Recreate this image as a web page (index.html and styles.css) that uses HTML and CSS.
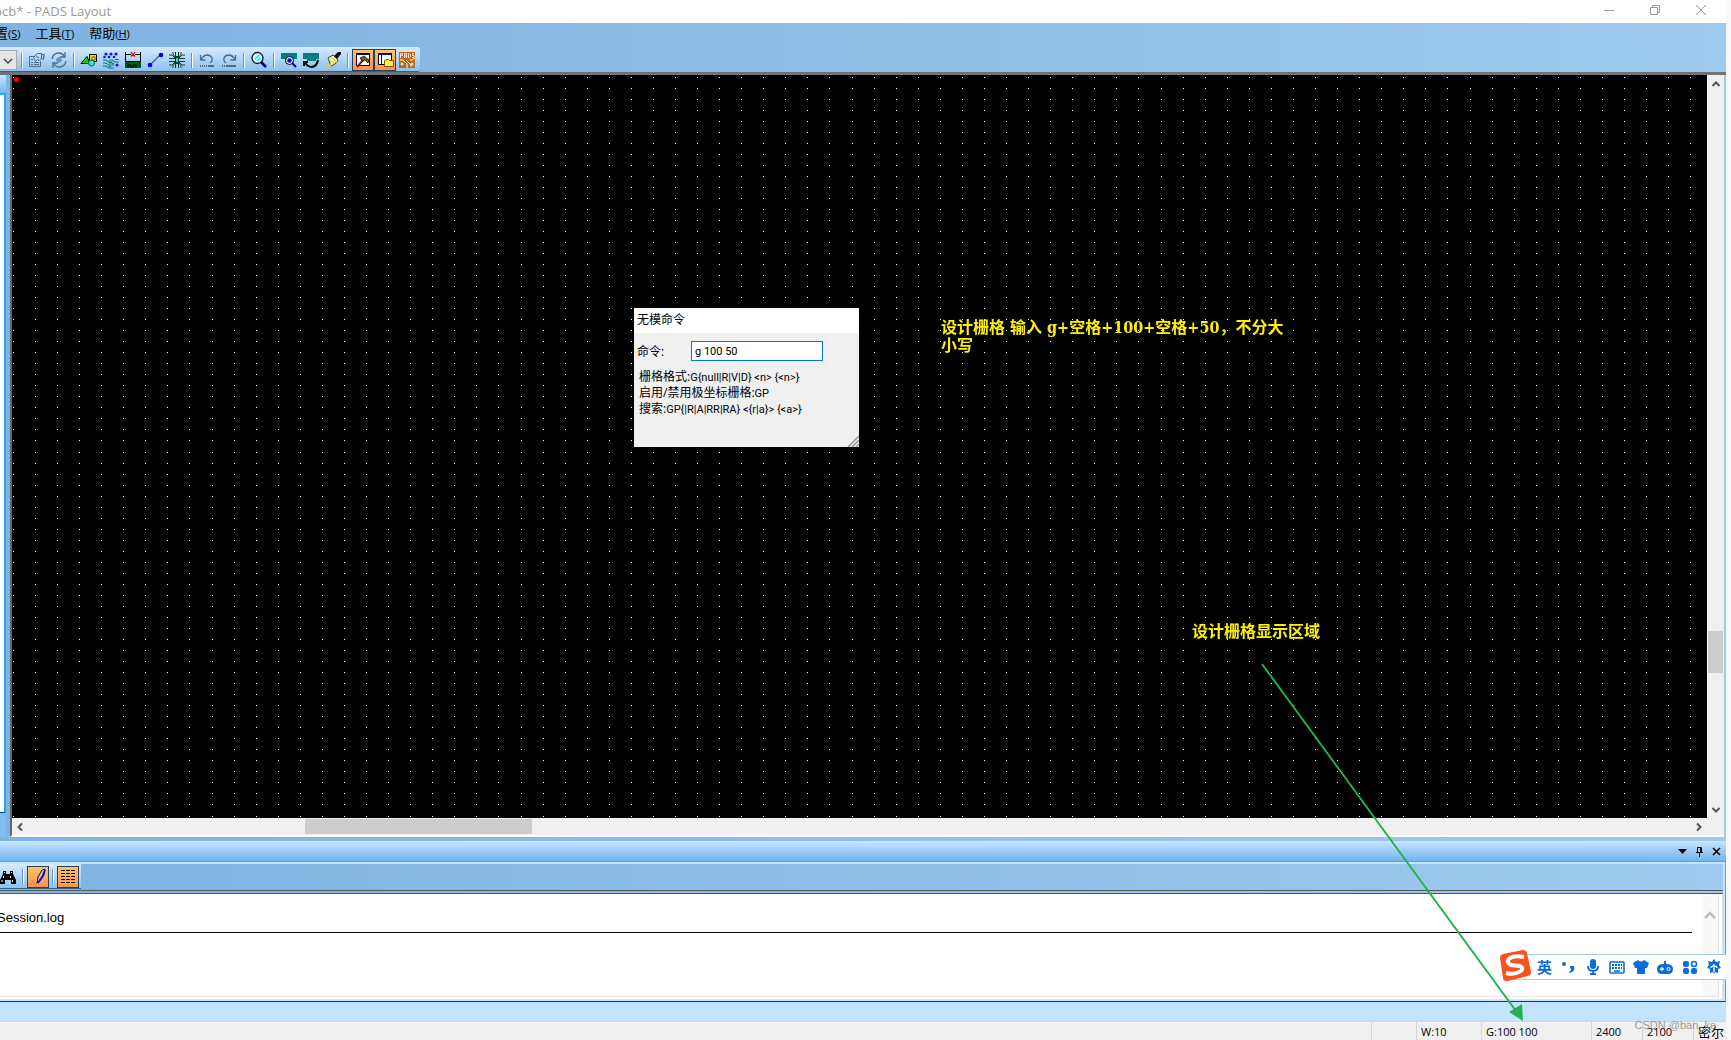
FILE: index.html
```html
<!DOCTYPE html>
<html lang="zh-CN">
<head>
<meta charset="utf-8">
<title>pcb* - PADS Layout</title>
<link rel="stylesheet" href="styles.css">
</head>
<body>
<div class="app">
  <header class="titlebar">
    <span class="title">pcb* - PADS Layout</span>
    <div class="window-buttons">
      <button aria-label="Minimize"><svg width="12" height="12" viewBox="0 0 12 12"><path d="M1 6.500h10" /></svg></button>
      <button aria-label="Restore"><svg width="12" height="12" viewBox="0 0 12 12"><path d="M1.500 3.500h7v7h-7zM3.500 3.500v-2h7v7h-2" /></svg></button>
      <button aria-label="Close"><svg width="12" height="12" viewBox="0 0 12 12"><path d="M1 1l10 10M11 1L1 11" /></svg></button>
    </div>
  </header>

  <nav class="menubar">
    <button class="menu menu-first">置<small>(<u>S</u>)</small></button>
    <button class="menu">工具<small>(<u>T</u>)</small></button>
    <button class="menu">帮助<small>(<u>H</u>)</small></button>
  </nav>

  <div class="toolbar-row">
    <div class="toolbar">
      <button class="combo" aria-label="Layer list"><svg width="16" height="20" viewBox="0 0 16 20"><path d="M4 8l4 4 4-4" fill="none" stroke="#444" stroke-width="1.500"/></svg></button>
      <i class="sep"></i>
      <button class="tool" aria-label="Properties"><svg viewBox="0 0 18 18"><g fill="none" stroke="#4d6b87"><path d="M7 5.500H1.500v10h11V10M3 8.500h2M3 11.500h2M6 11.500h5M3 13.500h2M6 13.500h5M5.500 6l4-3.500h4l2 2v4l-2-1-2 2-2-1-2 2-1-2z"/><path d="M13.500 2v6M16 2.500v4M8 5l3 2" /></g></svg></button>
      <button class="tool" aria-label="Cycle"><svg viewBox="0 0 18 18"><g fill="none" stroke="#4d6b87" stroke-width="1.300"><path d="M2 8q1-6 7-6 3 0 5 3M15 1v5h-5M16 10q-1 6-7 6-3 0-5-3M3 17v-5h5"/><path d="M9 6v6M6 9h6M7 7l4 4M11 7l-4 4" stroke="#6a91b8"/></g></svg></button>
      <i class="sep"></i>
      <button class="tool" aria-label="Drafting"><svg viewBox="0 0 18 18"><path d="M9.500 3.500h7v7h-7z" fill="#ffe000" stroke="#000"/><path d="M12 6h3v3h-3z" fill="#fff6a0" stroke="#000" stroke-width=".6"/><path d="M1 12.500L7 5.500l3 7z" fill="#00e000" stroke="#000"/><circle cx="11.500" cy="12" r="3" fill="#30e8f0" stroke="#063"/></svg></button>
      <button class="tool" aria-label="Design"><svg viewBox="0 0 18 18"><g fill="#1414e8"><circle cx="4" cy="3" r="1.600"/><circle cx="9" cy="3" r="1.600"/><circle cx="14" cy="3" r="1.600"/><circle cx="2.500" cy="6" r="1.300"/><circle cx="7" cy="6" r="1.300"/><circle cx="12" cy="6" r="1.300"/><circle cx="15" cy="14" r="1.600"/></g><path d="M1 9h3l3 2h3M7 9h3l3 2h4M13 8.500h4M1 12h3l3 2h5M7 12h3l2 1M1 15h3l3 2h5M7 15l2 1" stroke="#007f7f" fill="none" stroke-width="1.200"/></svg></button>
      <button class="tool" aria-label="Dimension"><svg viewBox="0 0 18 18"><path d="M1.500 1v9M16.500 1v9M2 3.500h5M11 3.500h5" stroke="#000"/><path d="M7 1l2 3 2-3M7 5.500l2-2 2 2" stroke="#e00" fill="none" stroke-width="1.300"/><path d="M1 10h16v7H1z" fill="#005a10"/><path d="M1 10.500h16M4 17v-3h3v3M9 17v-3h3v3" stroke="#000" fill="none"/></svg></button>
      <button class="tool" aria-label="Route"><svg viewBox="0 0 18 18"><path d="M4 14L14 4" stroke="#4a5a80" stroke-width="1.200"/><circle cx="4" cy="14" r="2.300" fill="#0000f5"/><circle cx="15" cy="4" r="2.300" fill="#0000f5"/></svg></button>
      <button class="tool" aria-label="Pour"><svg viewBox="0 0 18 18"><path d="M7.500 1v4M10.500 1v4M7.500 13v4M10.500 13v4M1 4h3l3 3M1 7.500h6M1 10.500h6M1 14h3l3-3M17 4h-3l-3 3M17 7.500h-6M17 10.500h-6M17 14h-3l-3-3M5 1v2l2 3M13 1v2l-2 3M5 17v-2l2-3M13 17v-2l-2-3" stroke="#163e26" fill="none"/><path d="M7 5h4v8H7z" fill="#003c20"/><path d="M8 7h2v4H8z" fill="#00eaff"/></svg></button>
      <i class="sep"></i>
      <button class="tool" aria-label="Undo"><svg viewBox="0 0 18 18"><path d="M2.500 4v5h5M3 9q2-5 7-5 5 1 4 6l-2 2" fill="none" stroke="#4d6b87" stroke-width="1.300"/><path d="M2 15h9" stroke="#4d6b87" stroke-width="2" stroke-dasharray="1 1"/><path d="M11 15h5" stroke="#4d6b87" stroke-width="2"/></svg></button>
      <button class="tool" aria-label="Redo"><svg viewBox="0 0 18 18"><path d="M15.500 4v5h-5M15 9q-2-5-7-5-5 1-4 6l2 2" fill="none" stroke="#4d6b87" stroke-width="1.300"/><path d="M2 15h5" stroke="#4d6b87" stroke-width="2" stroke-dasharray="1 1"/><path d="M7 15h9" stroke="#4d6b87" stroke-width="2"/></svg></button>
      <i class="sep"></i>
      <button class="tool" aria-label="Zoom"><svg viewBox="0 0 18 18"><path d="M11 11l5 5" stroke="#000080" stroke-width="2.600"/><circle cx="7.500" cy="7" r="5.500" fill="#d9fbff" stroke="#111" stroke-width="1.300"/><path d="M5 8l4-4M7 10l3-3" stroke="#1edff2" stroke-width="1.500"/></svg></button>
      <i class="sep"></i>
      <button class="tool" aria-label="View board"><svg viewBox="0 0 18 18"><path d="M1 2h16v6h-3v3H5V8H1z" fill="#008080"/><circle cx="9.500" cy="9.500" r="4" fill="#fff" stroke="#000"/><circle cx="9.500" cy="9.500" r="2.300" fill="#0000ff"/><path d="M12 12l4 4" stroke="#000080" stroke-width="2"/></svg></button>
      <button class="tool" aria-label="Redraw"><svg viewBox="0 0 18 18"><path d="M1 2h16v6h-3v2H5V8H1z" fill="#008080"/><path d="M3 11q2 5 7 5 5-1 6-7M2 15v-4h4" stroke="#000" stroke-width="2" fill="none"/></svg></button>
      <button class="tool" aria-label="Highlight"><svg viewBox="0 0 18 18"><path d="M17 1l-3 0-4 4 3 3 4-5z" fill="#111"/><path d="M4 7l5-3 5 5-3 4-4 2z" fill="#fff9d0" stroke="#333"/><path d="M7 6l6 5M5 8l5 5M1 15.500h4l2-2" stroke="#e8d800" fill="none" stroke-width="1.500"/></svg></button>
      <i class="sep"></i>
      <button class="tool on" aria-label="Design tools"><svg viewBox="0 0 18 18"><path d="M2.500 2.500h13v12h-13z" fill="#fff" stroke="#000"/><path d="M2 2h14v2H2z" fill="#000080"/><path d="M3 16l7-8" stroke="#8a1a1a" stroke-width="2"/><path d="M6 7l4-2 5 4-1 3-3-3-3 1z" fill="#6a6a00" stroke="#000" stroke-width=".7"/></svg></button>
      <button class="tool on" aria-label="Project explorer"><svg viewBox="0 0 18 18"><path d="M2.500 2.500h13v11h-13z" fill="#fff" stroke="#000"/><path d="M2 2h14v2H2z" fill="#000080"/><path d="M5.500 4v9" stroke="#000080"/><path d="M8.500 15.500v-6l2-1h2l1 1h4v6z" fill="#ffe94d" stroke="#775d00"/></svg></button>
      <button class="tool" aria-label="PADS Router"><svg viewBox="0 0 18 18"><path d="M1 1h16v16H1z" fill="#c9650c"/><path d="M2.500 7V2.500h2v2h-2M6.500 7V2.500h2V7M6.500 5h2M10.500 2.500h1l1 1v2l-1 1h-1zM16 2.500h-1.500v2H16v2h-2" stroke="#fff" stroke-width=".8" fill="none"/><path d="M2 9h3l4 4v4M8 9l5 5v2M12 9h2l3-2" stroke="#fff" fill="none"/><circle cx="4" cy="13" r="1.600" fill="#b8e4ff"/><circle cx="14" cy="13" r="1.600" fill="#b8e4ff"/></svg></button>
    </div>
  </div>

  <main class="workspace">
    <aside class="dock"><div class="dock-head"></div><div class="dock-body"></div></aside>
    <section class="editor">
      <div class="board">
        <canvas class="grid"></canvas>
        <i class="origin"></i>
        <p class="note note-input">设计栅格 输入 g+空格+100+空格+50，不分大小写</p>
        <p class="note note-area">设计栅格显示区域</p>
        <form class="dialog">
          <h1>无模命令</h1>
          <div class="field"><label for="cmd">命令:</label><input id="cmd" value="g 100 50" autocomplete="off"></div>
          <p>栅格格式:<code>G{null|R|V|D} &lt;n&gt; {&lt;n&gt;}</code></p>
          <p>启用/禁用极坐标栅格:<code>GP</code></p>
          <p>搜索:<code>GP{|R|A|RR|RA} &lt;{r|a}&gt; {&lt;a&gt;}</code></p>
          <svg class="grip" width="12" height="12" viewBox="0 0 12 12"><path d="M1 12L12 1M5 12l7-7M9 12l3-3" stroke="#999" stroke-width="1.500"/></svg>
        </form>
      </div>
      <div class="vscroll">
        <svg width="16" height="16" viewBox="0 0 16 16"><path d="M4.500 11L8 7.500l3.500 3.500" /></svg>
        <div class="vtrack"><i></i></div>
        <svg width="16" height="16" viewBox="0 0 16 16"><path d="M4.500 6L8 9.500 11.500 6" /></svg>
      </div>
      <div class="hscroll">
        <svg width="16" height="16" viewBox="0 0 16 16"><path d="M10 4.500L6.500 8l3.500 3.500" /></svg>
        <div class="htrack"><i></i></div>
        <svg width="16" height="16" viewBox="0 0 16 16"><path d="M6 4.500L9.500 8 6 11.500" /></svg>
      </div>
    </section>
  </main>

  <section class="output">
    <div class="output-head">
      <button aria-label="Panel menu"><svg width="11" height="11" viewBox="0 0 11 11"><path d="M1 3h9L5.500 8z"/></svg></button>
      <button aria-label="Pin panel"><svg width="11" height="11" viewBox="0 0 11 11"><path d="M3.500 6V1.500h4V6M2 6.500h7M5.500 7v4M6.500 2v4" fill="none" stroke="#000"/></svg></button>
      <button aria-label="Close panel"><svg width="11" height="11" viewBox="0 0 11 11"><path d="M2 2l7 7M9 2L2 9" stroke="#000" stroke-width="1.600"/></svg></button>
    </div>
    <div class="output-frame">
      <div class="output-tools">
        <div class="output-bar">
          <button class="tool find" aria-label="Find"><svg viewBox="0 0 18 18"><path d="M4 3h3v3h4V3h3v3l3 6v4h-5v-4H6v4H1v-4l3-6z"/><path d="M5.500 4v1M12.500 4v1M4.500 8v2M11.500 8v2M3 12v2M13.500 12v2" stroke="#fff"/></svg></button>
          <i class="sep"></i>
          <button class="tool on" aria-label="Edit log"><svg viewBox="0 0 18 18"><path d="M8 15l1-6 4-7 3-1-1 6-4 6z" fill="#d4c4a0" stroke="#111"/><path d="M9 15l4-6 3-7" stroke="#0000e0" stroke-width="1.600" fill="none"/><path d="M1 15.500h7M3 13.500h3" stroke="#999" stroke-dasharray="2 1"/></svg></button>
          <i class="sep"></i>
          <button class="tool on" aria-label="List"><svg viewBox="0 0 18 18"><path d="M2 2.500h14M2 5.500h14M2 8.500h14M2 11.500h14M2 14.500h14" stroke="#111" stroke-dasharray="4 1"/></svg></button>
        </div>
      </div>
      <div class="log">
        <div class="log-text"><a href="#log">Session.log</a></div>
        <div class="log-scroll"><svg width="14" height="14" viewBox="0 0 14 14"><path d="M2 10l5-5 5 5" fill="none" stroke="#bfbfbf" stroke-width="2.500"/></svg></div>
      </div>
    </div>
  </section>

  <div class="band"></div>
  <footer class="status">
    <span class="s-blank"></span>
    <span class="s-width">W:10</span>
    <span class="s-grid">G:100 100</span>
    <span class="s-pos">2400</span>
    <span class="s-pos">2100</span>
    <span class="s-unit">密尔</span>
  </footer>

  <svg class="arrow" width="266" height="360" viewBox="0 0 266 360"><path d="M2 1L256 348" stroke="#22b14c" stroke-width="2"/><path d="M263 358l-14-9 13-8z" fill="#22b14c"/></svg>

  <div class="ime">
    <svg class="ime-logo" width="32" height="32" viewBox="0 0 32 32"><path d="M4 4L24 0q3 0 4 3l4 19q0 3-3 4L9 31q-4 1-5-3L1 8q0-3 3-4z" fill="#f9511d"/><path d="M25 7q-9-2-14 1-5 4 1 7l9 1q5 3-1 6-6 3-13 1" fill="none" stroke="#fff" stroke-width="4"/></svg>
    <button class="ime-lang">英</button>
    <button aria-label="Punctuation"><svg viewBox="0 0 16 16"><circle cx="4" cy="5" r="2"/><path d="M10 7h4q2 5-4 7l-1-1q3-2 2-3l-1-1z"/></svg></button>
    <button aria-label="Voice"><svg viewBox="0 0 16 16"><rect x="5" y="0" width="6" height="10" rx="3"/><path d="M3 7q0 5 5 5t5-5M8 12v3M5 15h6" fill="none" stroke="#0b6cda" stroke-width="1.800"/></svg></button>
    <button aria-label="Keyboard"><svg viewBox="0 0 16 16"><rect x="1" y="3" width="14" height="11" rx="1" fill="none" stroke="#0b6cda" stroke-width="1.600"/><path d="M3 6h10M3 9h10" stroke="#0b6cda" stroke-width="1.800" stroke-dasharray="2 1"/><path d="M5 12h6" stroke="#0b6cda" stroke-width="1.600"/></svg></button>
    <button aria-label="Skin"><svg viewBox="0 0 16 16"><path d="M5 1q3 3 6 0l5 3-2 5h-2v6H4V9H2L0 4z"/></svg></button>
    <button aria-label="Games"><svg viewBox="0 0 16 16"><path d="M7 2h2v3q7 0 7 5t-5 5H5q-5 0-5-5t7-5z"/><path d="M3 10h4M5 8v4" stroke="#fff" stroke-width="1.300"/><circle cx="11.500" cy="10" r="1.500" fill="none" stroke="#fff"/></svg></button>
    <button aria-label="Toolbox"><svg viewBox="0 0 16 16"><rect x="1" y="2" width="6" height="6" rx="2"/><circle cx="12" cy="5" r="2.500" fill="none" stroke="#0b6cda" stroke-width="1.600"/><rect x="1" y="9" width="6" height="6" rx="2"/><rect x="9" y="9" width="6" height="6" rx="2"/></svg></button>
    <button aria-label="Settings"><svg viewBox="0 0 16 16"><path d="M8 0l2 3 4-1-1 4 2 3-3 1v4l-3-1-1 2-1-2-3 1v-4L1 9l2-3-1-4 4 1z"/><path d="M8 5v8M5 9q0-2 3-2t3 2" stroke="#fff" stroke-width="1.300" fill="none"/></svg></button>
  </div>
  <span class="watermark">CSDN @ban_ke</span>
</div>
<script src="grid.js"></script>
</body>
</html>
```

FILE: grid.js
```js
// Paints the design grid, one pixel per grid point.
const canvas = document.querySelector('.grid');
const STEP_X = 22.07;
const STEP_Y = 11.03;

function drawGrid() {
  const box = canvas.parentElement;
  canvas.width = box.clientWidth;
  canvas.height = box.clientHeight;
  const ctx = canvas.getContext('2d');
  ctx.fillStyle = '#fff';
  for (let y = 2; y < canvas.height; y += STEP_Y) {
    for (let x = 1.4; x < canvas.width; x += STEP_X) {
      ctx.fillRect(Math.floor(x), Math.floor(y), 1, 1);
    }
  }
}

drawGrid();
window.addEventListener('resize', drawGrid);

// The modeless command box opens ready for typing, caret after the command.
const command = document.querySelector('#cmd');
command.focus();
command.setSelectionRange(command.value.length, command.value.length);
```

FILE: styles.css
```css
* { box-sizing: border-box; }
body {
  margin: 0;
  background: #f9f9f9;
  color: #000;
  font-family: "Open Sans", "Noto Sans CJK SC", sans-serif;
  font-size: 12px;
}
button { margin: 0; padding: 0; border: 0; background: none; font: inherit; color: inherit; }
svg { display: block; flex: none; }
.app {
  position: relative;
  display: flex;
  flex-direction: column;
  height: 100vh;
  margin-right: 5px;
  overflow: hidden;
  background: linear-gradient(90deg, #7fb3e1, #9fcaee);
}

.titlebar { display: flex; justify-content: space-between; height: 23px; background: #fff; }
.title { margin-left: -6px; font-size: 13px; line-height: 23px; color: #999; }
.window-buttons { display: flex; gap: 34px; margin-right: 19px; align-items: center; height: 20px; }
.window-buttons path { fill: none; stroke: #999; }

.menubar { display: flex; gap: 15px; height: 24px; padding-bottom: 3px; }
.menu { font-size: 13px; line-height: 21px; white-space: nowrap; }
.menu-first { margin-left: -5px; }
.menu small { font-size: 11px; }

.toolbar-row { height: 28px; border-bottom: 3px solid #6f7378; }
.toolbar {
  display: flex;
  align-items: center;
  width: 420px;
  height: 25px;
  padding-top: 2px;
  background: linear-gradient(#d6eaff, #8cc1ef);
  border-bottom: 1px solid #27648f;
  border-radius: 0 3px 3px 0;
}
.combo { width: 17px; height: 20px; margin-right: 1px; border: 1px solid #aaa; border-left: 0; background: #e6e6e6; }
.sep { width: 2px; height: 15px; margin: 0 3px; background: #fff; border-left: 1px solid #5c95c9; }
.tool { display: flex; flex: none; align-items: center; justify-content: center; width: 22px; height: 22px; }
.tool svg { width: 18px; height: 18px; }
.tool.on { border: 1px solid #23415c; background: linear-gradient(#fcc665, #fc9150); }

.workspace { display: flex; flex: 1; min-height: 0; }
.dock { display: flex; flex-direction: column; width: 6px; margin-right: 4px; background: #7fbdf2; }
.dock-head { height: 18px; background: linear-gradient(#c9e5ff, #72b5ee); }
.dock-body { flex: 1; margin-bottom: 24px; background: #fff; border: solid #29a5f5; border-width: 2px 2px 1px 0; border-bottom-color: #003c86; }
.editor {
  display: grid;
  grid-template: minmax(0, 1fr) 17px / minmax(0, 1fr) 17px;
  flex: 1;
  min-width: 0;
  margin-right: 2px;
  border-left: 2px solid #666;
  border-bottom: 2px solid #fff;
  background: #f0f0f0;
}
.board { position: relative; overflow: hidden; background: #000; }
.grid { position: absolute; inset: 0; }
.origin { position: absolute; left: 2px; top: 2px; width: 5px; height: 5px; border-radius: 50%; background: #f00; }
.note {
  position: absolute;
  margin: 0;
  color: #fff000;
  font-family: "DejaVu Serif Condensed", "Noto Sans CJK SC", serif;
  font-size: 16px;
  font-weight: 700;
  line-height: 18px;
}
.note-input { left: 929px; top: 244px; width: 350px; }
.note-area { left: 1180px; top: 548px; }

.dialog { position: absolute; left: 622px; top: 233px; width: 225px; height: 139px; background: #f0f0f0; }
.dialog h1 { margin: 0; padding-left: 3px; background: #fff; font-size: 12px; font-weight: 400; line-height: 24px; border-bottom: 1px solid #fff; }
.field { display: flex; align-items: center; height: 20px; margin: 8px 0 8px 3px; }
.field label { width: 54px; }
.field input { width: 132px; height: 20px; padding: 0 3px; border: 1px solid #0078d7; outline: 0; background: #fff; font-family: "Roboto", sans-serif; font-size: 11px; }
.dialog p { height: 16px; margin: 0 0 0 5px; line-height: 16px; white-space: nowrap; }
.dialog code { font-family: "Roboto", sans-serif; font-size: 11px; }
.grip { position: absolute; right: 0; bottom: 0; }

.vscroll { display: flex; flex-direction: column; border-left: 1px solid #fff; }
.hscroll { display: flex; grid-column: 1 / -1; padding: 1px 17px 0 0; }
.vscroll path, .hscroll path { fill: none; stroke: #555; stroke-width: 2; }
.vtrack { flex: 1; padding-top: 540px; }
.vtrack i { display: block; width: 15px; height: 42px; background: #cdcdcd; }
.htrack { flex: 1; padding-left: 277px; }
.htrack i { display: block; width: 227px; height: 15px; background: #cdcdcd; }

.output { display: flex; flex-direction: column; height: 165px; padding-top: 4px; }
.output-head {
  display: flex;
  justify-content: flex-end;
  align-items: center;
  gap: 6px;
  height: 20px;
  padding-right: 4px;
  background: linear-gradient(#c9e5ff, #70b4ef);
}
.output-frame {
  display: flex;
  flex: 1;
  flex-direction: column;
  border: solid #3aadf5;
  border-width: 1px 1px 1px 0;
  border-bottom-color: #003c86;
  padding: 2px 2px 1px 0;
  background: #c2e4ff;
}
.output-tools { height: 30px; background: linear-gradient(90deg, #7fb3e1, #9fcaee); border-bottom: 4px double #555; }
.output-bar { display: flex; align-items: center; width: 81px; height: 25px; padding-top: 1px; background: linear-gradient(#d6eaff, #8cc1ef); border-bottom: 1px solid #27648f; }
.find { margin-left: -3px; }
.log { display: flex; flex: 1; border: solid #e3e3e3; border-width: 0 1px 1px 0; box-shadow: inset -3px -2px #fff, inset -4px -3px #e3e3e3; background: #fff; }
.log-text { flex: 1; height: 39px; margin-right: 10px; border-bottom: 1px solid #000; padding-top: 14px; }
.log-text a { display: block; margin-left: -3px; color: #000; font-family: "Liberation Sans", sans-serif; font-size: 13px; line-height: 20px; text-decoration: none; }
.log-scroll { width: 16px; margin: 0 4px 3px 0; padding: 14px 1px; background: #f8f8f8; }

.band { height: 19px; background: #c2e4ff; }
.status { display: flex; justify-content: flex-end; height: 19px; border-top: 1px solid #d5d5d5; background: #f0f0f0; font-size: 11px; line-height: 20px; white-space: nowrap; }
.status span { border-left: 1px solid #d5d5d5; padding-left: 4px; }
.s-blank { width: 45px; }
.s-width { width: 65px; }
.s-grid { width: 110px; }
.s-pos { width: 51px; }
.s-unit { width: 33px; font-size: 13px; }

.arrow { position: absolute; left: 1260px; top: 663px; }
.ime {
  position: absolute;
  right: 0;
  bottom: 60px;
  display: flex;
  align-items: center;
  justify-content: space-between;
  width: 214px;
  height: 26px;
  padding: 0 4px 0 24px;
  border: 1px solid #aacbec;
  border-right: 0;
  background: #fff;
  color: #0b6cda;
}
.ime svg { width: 16px; height: 16px; fill: #0b6cda; }
.ime .ime-logo { position: absolute; left: -14px; top: -5px; width: 32px; height: 32px; }
.ime-lang { font-size: 15px; font-weight: 700; line-height: 24px; }
.watermark { position: absolute; right: 10px; bottom: 7px; color: #888; font-family: "Liberation Sans", sans-serif; font-size: 11px; line-height: 16px; opacity: .8; }
```
